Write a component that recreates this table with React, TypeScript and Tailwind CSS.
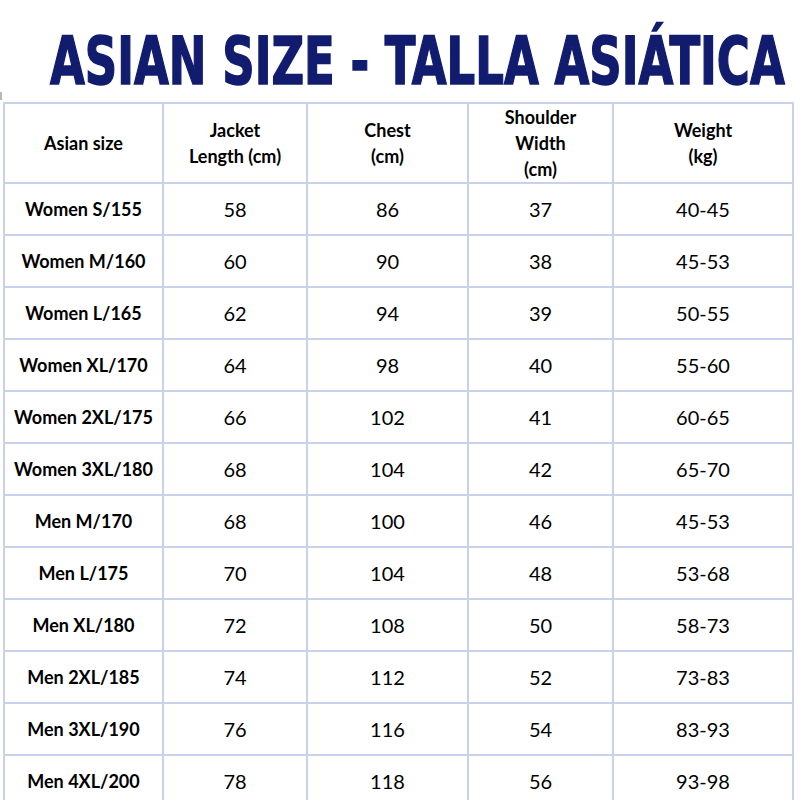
import React from "react";

const rows: [string, string, string, string, string][] = [
  ["Women S/155", "58", "86", "37", "40-45"],
  ["Women M/160", "60", "90", "38", "45-53"],
  ["Women L/165", "62", "94", "39", "50-55"],
  ["Women XL/170", "64", "98", "40", "55-60"],
  ["Women 2XL/175", "66", "102", "41", "60-65"],
  ["Women 3XL/180", "68", "104", "42", "65-70"],
  ["Men M/170", "68", "100", "46", "45-53"],
  ["Men L/175", "70", "104", "48", "53-68"],
  ["Men XL/180", "72", "108", "50", "58-73"],
  ["Men 2XL/185", "74", "112", "52", "73-83"],
  ["Men 3XL/190", "76", "116", "54", "83-93"],
  ["Men 4XL/200", "78", "118", "56", "93-98"],
];

const font = { fontFamily: "Lato, 'Open Sans', sans-serif" };

export default function App() {
  return (
    <div className="w-[800px] h-[800px] overflow-hidden bg-white relative" style={font}>
      <div className="h-[102px] pl-[50px] pt-[23px] relative">
        <div
          className="inline-block origin-left scale-x-[0.77] whitespace-nowrap text-[65px] leading-[78px] font-bold text-[#111c6e] [-webkit-text-stroke:1.5px_#111c6e]"
          style={{ fontFamily: "'DejaVu Sans Condensed', 'DejaVu Sans', sans-serif" }}
        >
          ASIAN SIZE - TALLA ASIÁTICA
        </div>
        <div className="absolute left-0 top-[92px] w-[2px] h-[8px] bg-[#b8b8b8]" />
      </div>
      <table className="ml-[3px] w-[789px] table-fixed border-collapse text-black">
        <colgroup>
          <col className="w-[159px]" />
          <col className="w-[144px]" />
          <col className="w-[161px]" />
          <col className="w-[145px]" />
          <col className="w-[180px]" />
        </colgroup>
        <thead>
          <tr className="h-[80px]">
            {["Asian size", "Jacket\nLength (cm)", "Chest\n(cm)", "Shoulder\nWidth\n(cm)", "Weight\n(kg)"].map((h) => (
              <th
                key={h}
                className="border-2 border-[#c9d2ea] text-center align-middle font-bold text-[18px] leading-[26px] whitespace-pre-line p-0"
              >
                {h}
              </th>
            ))}
          </tr>
        </thead>
        <tbody>
          {rows.map((r) => (
            <tr key={r[0]} className="h-[52px]">
              <td className="border-2 border-[#c9d2ea] text-center align-middle font-bold text-[18px] p-0 whitespace-nowrap">
                {r[0]}
              </td>
              {r.slice(1).map((v, i) => (
                <td key={i} className="border-2 border-[#c9d2ea] text-center align-middle text-[20px] p-0">
                  {v}
                </td>
              ))}
            </tr>
          ))}
        </tbody>
      </table>
    </div>
  );
}
